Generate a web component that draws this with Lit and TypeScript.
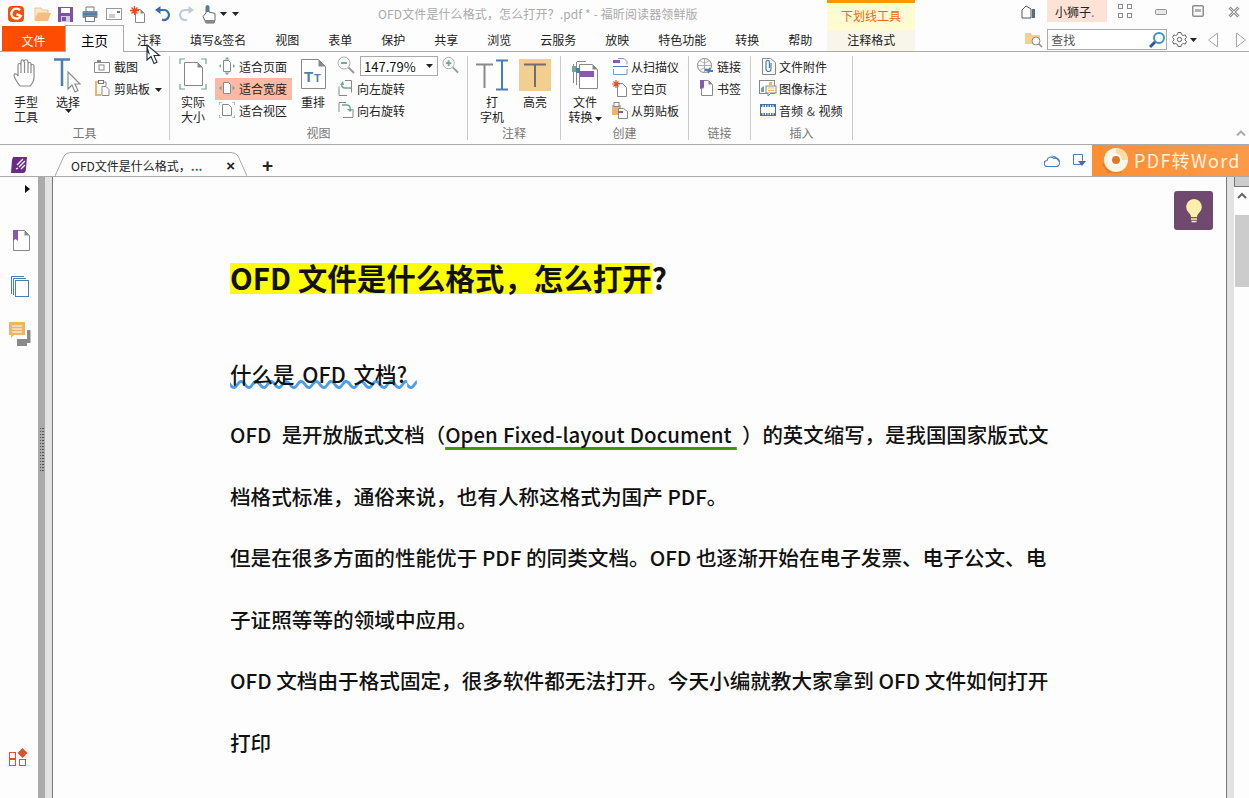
import { LitElement, html, css } from 'lit'
import { customElement } from 'lit/decorators.js'

const GR = '#8a8a8a'
const TEAL = '#6fa893'
const BL = '#4a7eb5'
const PU = '#8a5aa8'
const OR = '#f0b464'

const ic = {
  logo: html`<svg width="16" height="16" viewBox="0 0 16 16"><rect width="16" height="16" rx="4" fill="#f1520f"/><path d="M12 4.200A5 5 0 1 0 12.800 10L8.500 8.200" fill="none" stroke="#fff" stroke-width="2.400"/></svg>`,
  folder: html`<svg width="17" height="16" viewBox="0 0 17 16"><path d="M1 2h6l1 2h6v3H4L1 14z" fill="#fbe6c6" stroke="#f0c48c"/><path d="M4 7h13l-3 8H1z" fill="#f3bf80"/></svg>`,
  save: html`<svg width="15" height="15" viewBox="0 0 15 15"><rect width="15" height="15" fill="#7f51a5"/><rect x="3" y="1" width="9" height="5" fill="#fff"/><rect x="3" y="9" width="9" height="6" fill="#d9cbe6"/><rect x="4" y="10" width="4" height="4" fill="#7f51a5"/></svg>`,
  print: html`<svg width="16" height="16" viewBox="0 0 16 16"><path d="M4 5V1h8v4" fill="#fff" stroke="#7a7a7a"/><rect x="0.500" y="5" width="15" height="7" rx="1" fill="#7c8a96"/><rect x="1" y="7" width="14" height="2" fill="#4a7eb5"/><rect x="3.500" y="10.500" width="9" height="5" fill="#fff" stroke="#7a7a7a"/></svg>`,
  mail: html`<svg width="16" height="13" viewBox="0 0 16 13"><rect x="0.500" y="0.500" width="15" height="11" fill="#fff" stroke="#9a9a9a"/><path d="M3 7h6M3 9h6" stroke="#9a9a9a"/><rect x="11" y="3" width="3" height="2" fill="#4a7eb5"/></svg>`,
  fresh: html`<svg width="16" height="17" viewBox="0 0 16 17"><path d="M5.500 3.500h5l4 4v9h-9z" fill="#fff" stroke="#888"/><path d="M10.500 3.500l4 4h-4z" fill="#888"/><path d="M4.500 0v9M0 4.500h9M1.500 1.500l6 6M7.500 1.500l-6 6" stroke="#ea4b22" stroke-width="1.300"/></svg>`,
  undo: html`<svg width="17" height="16" viewBox="0 0 17 16"><path d="M5 4h5a5 5 0 1 1-2 9.600" fill="none" stroke="#3a6ca6" stroke-width="2.200"/><path d="M6.500 0v8L1 4z" fill="#3a6ca6"/></svg>`,
  redo: html`<svg width="17" height="16" viewBox="0 0 17 16"><path d="M12 4H7a5 5 0 1 0 2 9.600" fill="none" stroke="#bccde0" stroke-width="2.200"/><path d="M10.500 0v8L16 4z" fill="#bccde0"/></svg>`,
  pointer: html`<svg width="16" height="19" viewBox="0 0 16 19"><path d="M4 8V2a1.500 1.500 0 0 1 3 0v5l6 1.500V15l-1 3H4L1 11.500z" fill="#fff" stroke="#666"/><path d="M4 7V2a1.500 1.500 0 0 1 3 0v5z" fill="#4a7eb5"/><rect x="3" y="15" width="10" height="3" fill="#888"/></svg>`,
  tag: html`<svg width="15" height="14" viewBox="0 0 15 14"><path d="M1 5l4-4 5 3v9H1z" fill="#fff" stroke="#555"/><rect x="11" y="4" width="3" height="9" fill="#5a6a80"/></svg>`,
  full: html`<svg width="14" height="14" viewBox="0 0 14 14" fill="none" stroke="#8a8a8a"><rect x="0.500" y="0.500" width="4" height="4"/><rect x="9.500" y="0.500" width="4" height="4"/><rect x="0.500" y="9.500" width="4" height="4"/><rect x="9.500" y="9.500" width="4" height="4"/></svg>`,
  min: html`<svg width="12" height="6" viewBox="0 0 12 6"><rect x="0.500" y="0.500" width="11" height="5" rx="1" fill="#e8e8e8" stroke="#8f8f8f"/></svg>`,
  max: html`<svg width="12" height="12" viewBox="0 0 12 12"><rect x="0.750" y="0.750" width="10.500" height="10.500" rx="1" fill="none" stroke="#8f8f8f" stroke-width="1.500"/><rect x="3" y="4" width="6" height="3" fill="#b5b5b5"/></svg>`,
  close: html`<svg width="12" height="12" viewBox="0 0 12 12"><path d="M1.500 1.500l9 9M10.500 1.500l-9 9" stroke="#8f8f8f" stroke-width="3"/><path d="M1.500 1.500l9 9M10.500 1.500l-9 9" stroke="#e6e6e6" stroke-width="1"/></svg>`,
  fsearch: html`<svg width="18" height="16" viewBox="0 0 18 16"><path d="M0 1h6l1 2h8v9H0z" fill="#f3cf96"/><circle cx="11" cy="9" r="4" fill="#fff" stroke="#888"/><path d="M14 12l3 3" stroke="#888" stroke-width="1.500"/></svg>`,
  mag: html`<svg width="18" height="18" viewBox="0 0 18 18"><circle cx="11" cy="7" r="5" fill="#fff" stroke="#3f8fd0" stroke-width="2"/><path d="M7 11l-5 5" stroke="#2c5f99" stroke-width="3"/></svg>`,
  gear: html`<svg width="15" height="15" viewBox="0 0 15 15" fill="none" stroke="#666"><path d="M6 .5h3l.5 2 1.700 1 2-.6 1.300 2.600-1.500 1.500v1l1.500 1.500-1.300 2.600-2-.6-1.700 1-.5 2H6l-.5-2-1.700-1-2 .6L.5 9.500 2 8V7L.5 5.500l1.300-2.600 2 .6 1.700-1z"/><circle cx="7.500" cy="7.500" r="2.200"/></svg>`,
  prev: html`<svg width="12" height="16" viewBox="0 0 12 16"><path d="M10.500 1v14L1.500 8z" fill="#fff" stroke="#a8a8a8"/></svg>`,
  next: html`<svg width="12" height="16" viewBox="0 0 12 16"><path d="M1.500 1v14l9-7z" fill="#fff" stroke="#a8a8a8"/></svg>`,
  hand: html`<svg width="26" height="29" viewBox="0 0 26 29" fill="#fff" stroke="#8c8c8c" stroke-width="1.200"><path d="M7 27c-3-4-6-8-6-11 1-2 3-1 4 1V6c0-2 3-2 3 0V3c0-3 3-3 3 0v0c0-3 4-3 4 0v2c0-2 3-2 3 0v2c0-2 3-2 3 0v11c0 4-2 7-4 9z"/><path d="M8 6v8M11.500 3v11M15 5v9M18 7v7"/></svg>`,
  select: html`<svg width="28" height="35" viewBox="0 0 28 35"><path d="M0 1.500h16M8 2v26" stroke="#4a7eb5" stroke-width="2.500"/><path d="M14 14v17l4-4 3 7 3-1.500-3-6.500h5z" fill="#fff" stroke="#8c8c8c" stroke-width="1.200"/></svg>`,
  camera: html`<svg width="16" height="13" viewBox="0 0 16 13"><path d="M.5 2.500h15v10H.5z" fill="#fff" stroke="#888"/><rect x="3" y="0" width="4" height="2" fill="#888"/><rect x="5" y="5" width="5" height="5" fill="#fff" stroke="#888"/></svg>`,
  clip: html`<svg width="15" height="16" viewBox="0 0 15 16"><path d="M4 2H1v13h5" fill="none" stroke="#eeb468" stroke-width="2"/><path d="M8 2h3v4" fill="none" stroke="#888"/><rect x="3.500" y="0.500" width="5" height="3" fill="#fff" stroke="#777"/><path d="M7 6.500h4l3 3v6H7z" fill="#fff" stroke="#888"/></svg>`,
  actual: html`<svg width="28" height="32" viewBox="0 0 28 32"><path d="M1 6V1h5M22 1h5v5M1 26v5h5M27 26v5h-5" fill="none" stroke=${TEAL} stroke-width="1.200"/><path d="M5.500 4.500h13l5 5v18h-18z" fill="#fff" stroke="#888"/><path d="M18.500 4.500l5 5h-5z" fill="#888"/></svg>`,
  fitPage: html`<svg width="16" height="18" viewBox="0 0 16 18"><path d="M8 0l2.500 2.500h-5zM8 18l-2.500-2.500h5z" fill=${TEAL}/><path d="M0 9l2-2v4zM16 9l-2-2v4z" fill=${TEAL}/><path d="M4.500 3.500h5l2 2v9h-7z" fill="#fff" stroke="#888"/></svg>`,
  fitWidth: html`<svg width="16" height="14" viewBox="0 0 16 14"><path d="M0 7l2.500-2.500v5zM16 7l-2.500-2.500v5z" fill=${TEAL}/><path d="M4.500 1.500h5l2 2v9h-7z" fill="#fff" stroke="#888"/></svg>`,
  fitView: html`<svg width="16" height="16" viewBox="0 0 16 16"><path d="M0 3V0h3M13 0h3v3M0 13v3h3M16 13v3h-3" fill="none" stroke=${TEAL} stroke-width="1.200"/><path d="M3.500 2.500h6l3 3v8h-9z" fill="#fff" stroke="#888"/></svg>`,
  reflow: html`<svg width="25" height="30" viewBox="0 0 25 30"><path d="M.5.500h17l7 7v22H.5z" fill="#fff" stroke="#888"/><path d="M17.500.500l7 7h-7z" fill="#888"/><text x="3" y="23" font-family="Liberation Sans" font-weight="700" font-size="15" fill="#4a7eb5">T</text><text x="13" y="23" font-family="Liberation Sans" font-weight="700" font-size="11" fill="#4a7eb5">T</text></svg>`,
  zoomOut: html`<svg width="18" height="18" viewBox="0 0 18 18"><circle cx="7" cy="7" r="6" fill="#fff" stroke="#aaa"/><path d="M4 7h6" stroke=${TEAL} stroke-width="2"/><path d="M11.500 11.500l5.500 5.500" stroke="#999" stroke-width="2"/></svg>`,
  zoomIn: html`<svg width="17" height="18" viewBox="0 0 18 18"><circle cx="7" cy="7" r="6" fill="#fff" stroke="#aaa"/><path d="M4 7h6M7 4v6" stroke=${TEAL} stroke-width="2"/><path d="M11.500 11.500l5.500 5.500" stroke="#999" stroke-width="2"/></svg>`,
  rotL: html`<svg width="16" height="18" viewBox="0 0 16 18" fill="none"><path d="M7 1.500h6.500v12M1 7.500v9h8" stroke="#888"/><path d="M13 9H6.500a3 3 0 0 1-2-5" stroke=${TEAL} stroke-width="1.500"/><path d="M2 6l3-4 1 4z" fill=${TEAL}/></svg>`,
  rotR: html`<svg width="16" height="18" viewBox="0 0 16 18" fill="none"><path d="M1 1.500h7M1 2v9M15 8v8.500H5" stroke="#888"/><path d="M4 4h5a3 3 0 0 1 3 4" stroke=${TEAL} stroke-width="1.500"/><path d="M9 8h6l-3 3z" fill=${TEAL}/></svg>`,
  typew: html`<svg width="33" height="32" viewBox="0 0 33 32"><path d="M0 5.500h17M8.500 5v24" stroke=${GR} stroke-width="2"/><path d="M20 1.500h12M20 30.500h12M26 2v28" stroke=${BL} stroke-width="2"/></svg>`,
  high: html`<svg width="32" height="32" viewBox="0 0 32 32"><rect width="32" height="32" fill="#f2cf90"/><path d="M5 5.500h22M16 5v23" stroke="#6f6f6f" stroke-width="2"/></svg>`,
  conv: html`<svg width="27" height="32" viewBox="0 0 27 32"><path d="M1.500 5v19M5 2.500h9M4.500 3v23" fill="none" stroke=${GR}/><rect x="0" y="7" width="4" height="6" fill=${TEAL}/><path d="M7.500 5.500h13l5 5v19h-18z" fill="#fff" stroke="#888"/><path d="M20.500 5.500l5 5h-5z" fill="#888"/><rect x="8" y="12" width="14" height="6" fill=${PU}/><rect x="4" y="9" width="4" height="5" fill=${BL}/></svg>`,
  scan: html`<svg width="15" height="17" viewBox="0 0 15 17"><path d="M5 .5h6l3 3v3M.5 11v5.500h13.500V11" fill="none" stroke="#7a9cc0"/><rect y="2" width="7" height="3" fill=${PU}/><path d="M0 8.500h15" stroke=${BL}/></svg>`,
  blank: html`<svg width="16" height="17" viewBox="0 0 16 17"><path d="M5.500 3.500h5l4 4v9h-9z" fill="#fff" stroke="#888"/><path d="M4 0v8M0 4h8M1.500 1.500l5 5M6.500 1.500l-5 5" stroke="#ea4b22" stroke-width="1.200"/></svg>`,
  clip2: html`<svg width="16" height="17" viewBox="0 0 16 17"><path d="M0 3h9v10H0z" fill=${OR}/><rect x="2" y="0.500" width="5" height="4" fill="#fff" stroke="#888"/><path d="M6.500 6.500h5l4 3v7h-9z" fill="#fff" stroke="#888"/><rect x="6" y="9" width="5" height="2" fill=${PU}/></svg>`,
  link: html`<svg width="17" height="17" viewBox="0 0 17 17" fill="none"><circle cx="7.500" cy="7.500" r="7" stroke="#888"/><path d="M.5 7.500h14M7.500.5v14M3 2.500c3 3 6 3 9 0M3 12.500c3-3 6-3 9 0" stroke="#aaa"/><path d="M8 12h4l1-2M16 13h-4l-1 2" stroke=${BL} stroke-width="2"/></svg>`,
  mark: html`<svg width="14" height="16" viewBox="0 0 14 16"><path d="M2.500.5h7l4 4v11h-11z" fill="#fff" stroke="#888"/><path d="M9.500.5l4 4h-4z" fill="#888"/><path d="M1 0h4v7l-1 2-1-1-2 1z" fill=${PU}/></svg>`,
  attach: html`<svg width="15" height="17" viewBox="0 0 15 17" fill="none"><path d="M1.500.5h8l5 4v12h-13z" stroke="#888"/><path d="M10 5v6a2.500 2.500 0 0 1-5 0V4a1.700 1.700 0 0 1 3.400 0v6" stroke=${BL} stroke-width="1.200"/></svg>`,
  imgnote: html`<svg width="18" height="17" viewBox="0 0 18 17"><rect x="0.500" y="0.500" width="15" height="13" fill="#fff" stroke="#888"/><path d="M2 12V8l3-2v6z" fill=${TEAL}/><rect x="7" y="6" width="10" height="7" fill="#fff" stroke="#888"/><path d="M9 13v3l3-3" fill="#fff" stroke="#888"/><rect x="10" y="2" width="3" height="3" fill=${OR}/><path d="M9 8h6M9 10.500h6" stroke=${OR}/></svg>`,
  video: html`<svg width="16" height="12" viewBox="0 0 16 12"><rect x="0.500" y="0.500" width="15" height="11" fill="#fff" stroke="#3f74ad"/><path d="M1 2h14M1 10h14" stroke="#3f74ad" stroke-width="2" stroke-dasharray="1.500 1"/></svg>`,
  docs: html`<svg width="16" height="16" viewBox="0 0 16 16"><path d="M2 0h14l-1 12c0 2-1 4-3 4H0l1-13z" fill="#6c2a86"/><path d="M6 8l6-6M8 10l6-6M10 12l4-4M5 12l2-1" stroke="#fff" stroke-width="1.300"/></svg>`,
  cloud: html`<svg width="16" height="12" viewBox="0 0 16 12"><path d="M3.500 11.500a3 3 0 0 1-.5-6 4 4 0 0 1 7-2 3.500 3.500 0 0 1 3 8z" fill="#fff" stroke=${BL} stroke-width="1.200"/><path d="M7 1c4-1 8 2 8 7-1-3-4-6-8-7z" fill=${BL}/></svg>`,
  dl: html`<svg width="13" height="13" viewBox="0 0 13 13"><path d="M8 10.500H.5V.5h9v6" fill="none" stroke=${BL}/><path d="M5 7h8l-4 5z" fill="#3e6fa5"/></svg>`,
  wheel: html`<svg width="30" height="28" viewBox="0 0 30 28"><path d="M2 18L10 6l12 20H8z" fill="#e97f25"/><circle cx="16" cy="13" r="12" fill="#fdf5e6"/><path d="M16 1a12 12 0 0 1 12 12h-6A6 6 0 0 0 16 7z" fill="#fbdca8"/><circle cx="16" cy="13" r="6" fill="#fff"/><circle cx="16" cy="13" r="4" fill="#e4762a"/></svg>`,
  navMark: html`<svg width="18" height="21" viewBox="0 0 18 21"><path d="M1.500.5h11l5 5v15h-16z" fill="#fff" stroke=${GR}/><path d="M12.500.5l5 5h-5z" fill=${GR}/><path d="M1 0h5v11l-2.500-2L1 11z" fill=${PU}/></svg>`,
  navPages: html`<svg width="18" height="21" viewBox="0 0 18 21" fill="none" stroke=${BL}><path d="M.5 18V.5H13M2.500 19V2.500H15"/><rect x="4.500" y="4.500" width="13" height="16" fill="#fff"/></svg>`,
  navNote: html`<svg width="22" height="25" viewBox="0 0 22 25"><path d="M8 17h10V8h3.500v13H18v3H8z" fill=${GR}/><path d="M0 0h16v13H5l-3 3v-3H0z" fill=${OR}/><path d="M3 4h10M3 7h10M3 10h10" stroke="#fff"/></svg>`,
  navApps: html`<svg width="19" height="18" viewBox="0 0 19 18"><rect x="0.500" y="4.500" width="6" height="6" fill="#fff" stroke="#d8532f"/><rect x="0.500" y="11.500" width="6" height="6" fill="#fff" stroke="#d8532f"/><rect x="10.500" y="11.500" width="6" height="6" fill="#fff" stroke="#d8532f"/><path d="M13.500 0l5 5-5 5-5-5z" fill="#d8532f"/></svg>`,
  bulb: html`<svg width="18" height="26" viewBox="0 0 18 26"><path d="M9 1a8 8 0 0 0-5 14c1 1 2 2 2 4h6c0-2 1-3 2-4A8 8 0 0 0 9 1z" fill="#fbeeaa"/><path d="M6 21h6M6.500 23.500h5" stroke="#fbeeaa" stroke-width="1.400"/></svg>`,
  cursor: html`<svg width="16" height="21" viewBox="0 0 16 21"><path d="M1 1v15l4-3.500 3 7 3-1.300-3-6.700h5.500z" fill="#fff" stroke="#25303c" stroke-width="1.100"/><path d="M1 1v7l3 3z" fill="#25303c"/></svg>`
}

const arrow = html`<svg class="arw" width="7" height="4" viewBox="0 0 7 4"><path d="M0 0h7L3.500 4z" fill="#222"/></svg>`
const inlineArrow = html`<svg class="inline-arw" width="7" height="4" viewBox="0 0 7 4"><path d="M0 0h7L3.500 4z" fill="#222"/></svg>`

const bodyLines = [
  '档格式标准，通俗来说，也有人称这格式为国产 PDF。',
  '但是在很多方面的性能优于 PDF 的同类文档。OFD 也逐渐开始在电子发票、电子公文、电',
  '子证照等等的领域中应用。',
  'OFD 文档由于格式固定，很多软件都无法打开。今天小编就教大家拿到 OFD 文件如何打开',
  '打印'
]

const tabs = ['注释', '填写&签名', '视图', '表单', '保护', '共享', '浏览', '云服务', '放映', '特色功能', '转换', '帮助']

@customElement('app-root')
export class AppRoot extends LitElement {
  static styles = css`
    :host {
      display: block;
      position: relative;
      height: 798px;
      overflow: hidden;
      background: #fdfdfd;
      color: #222;
      font: 12px/15px "Noto Sans CJK SC", "Liberation Sans", sans-serif;
    }
    svg { display: block; flex: none; }

    /* title row */
    .title-row { display: flex; height: 26px; }
    .qa { display: flex; align-items: center; width: 370px; padding: 2px 0 0 8px; height: 24px; flex: none; }
    .qa-i { width: 24px; flex: none; display: flex; }
    .qa-i:first-child { width: 26px; }
    .qa-more { display: flex; gap: 5px; margin-left: -6px; }
    .title { width: 449px; flex: none; color: #aaa; line-height: 28px; white-space: pre; letter-spacing: .12px; }
    .ctx-top {
      width: 88px; height: 27px; flex: none; position: relative; z-index: 1;
      border-top: 3px solid #ff9500; background: #fffcd2; color: #f2670f; text-align: center; line-height: 25px;
    }
    .win { display: flex; align-items: flex-start; margin-left: 106px; }
    .win-tag { margin-top: 5px; }
    .user { width: 60px; height: 22px; margin-left: 11px; background: #fde3d6; line-height: 24px; padding-left: 8px; box-sizing: border-box; }
    .user b { color: #4a7eb5; font-weight: 400; }
    .win-full { margin: 4px 0 0 11px; }
    .win-min { margin: 9px 0 0 23px; }
    .win-max { margin: 5px 0 0 25px; }
    .win-close { margin: 6px 0 0 24px; }

    /* tab row */
    .tab-row { display: flex; height: 25px; border-bottom: 1px solid #aaa; padding-left: 2px; }
    .file { width: 63px; height: 25px; background: #ff4c00; color: #fff; text-align: center; line-height: 29px; flex: none; }
    .home {
      width: 57px; height: 25px; margin: -1px 0 -1px 1px; padding-bottom: 1px; flex: none;
      border: 1px solid #aaa; border-bottom: 0; background: #fdfdfd; color: #000;
      font-size: 13.500px; text-align: center; line-height: 28px; position: relative; left: -1px;
    }
    .tabs { display: flex; gap: 29px; padding-left: 12px; line-height: 28px; white-space: nowrap; }
    .ctx-bot { width: 88px; height: 25px; margin-left: 15px; flex: none; background: #f8f6ea; text-align: center; line-height: 28px; }
    .tools { display: flex; align-items: center; margin-left: 110px; height: 25px; padding-top: 1px; }
    .search {
      width: 120px; height: 21px; margin-left: 4px; box-sizing: border-box; border: 1px solid #aaa; background: #fff;
      display: flex; align-items: center; justify-content: space-between; padding: 0 0 0 3px; color: #555;
    }
    .gear { margin-left: 5px; }
    .gear-arw { margin-left: 3px; }
    .prev { margin-left: 10px; }
    .next { margin-left: 16px; }

    /* ribbon */
    .ribbon { display: flex; height: 92px; border-bottom: 1px solid #aaa; }
    .grp { display: flex; flex-direction: column; height: 84px; margin-top: 4px; border-right: 1px solid #ccc; box-sizing: border-box; flex: none; }
    .g1 { width: 170px; } .g2 { width: 298px; } .g3 { width: 93px; }
    .g4 { width: 128px; } .g5 { width: 62px; } .g6 { width: 102px; }
    .grp-body { display: flex; height: 71px; }
    .grp-label { height: 13px; line-height: 11px; text-align: center; color: #777; }
    .lg { display: flex; flex-direction: column; align-items: center; flex: none; text-align: center; }
    .lg-ic { height: 38px; display: flex; align-items: flex-start; justify-content: center; }
    .w40 { width: 40px; } .w44 { width: 44px; margin-left: 1px; } .w48 { width: 48px; } .w32 { width: 32px; margin-left: 3px; }
    .ml1 { margin-left: 1px; }
    .ml2 { margin-left: 2px; }
    .ml6 { margin-left: 6px; }
    .p2 { padding-top: 2px; } .p3 { padding-top: 3px; }
    .col { display: flex; flex-direction: column; flex: none; }
    .item { display: flex; align-items: center; gap: 3px; height: 22px; padding-bottom: 2px; box-sizing: border-box; white-space: nowrap; }
    .ic16 { width: 16px; display: flex; justify-content: center; flex: none; }
    .arw { flex: none; }
    .col-tools { margin-left: 6px; }
    .col-tools .item { gap: 4px; }
    .col-tools .inline-arw { margin-left: 5px; }
    .col-fit { width: 77px; }
    .col-fit .item { padding-left: 4px; gap: 4px; }
    .item.on { background: #fdb9a3; }
    .col-zoom { margin-left: 4px; }
    .col-zoom .item { padding-left: 1px; }
    .zoom-row { display: flex; align-items: flex-start; height: 22px; }
    .zoom-box {
      width: 78px; height: 20px; margin: 0 4px 0 5px; box-sizing: border-box; border: 1px solid #aaa; background: #fff;
      display: flex; align-items: center; justify-content: space-between; padding: 0 4px 0 3px; color: #111; font-size: 13px;
    }
    .col-make .item { padding-left: 3px; }
    .col-link { margin-left: 8px; }
    .col-link .ic16 { width: 17px; }
    .col-ins { margin-left: 9px; }
    .inline-arw { display: inline-block; vertical-align: middle; margin-left: 2px; }
    .amp { color: #444; padding: 0 1px; }
    .collapse { margin: 78px 0 0 383px; }

    /* document tabs */
    .doc-bar { display: flex; height: 31px; border-bottom: 1px solid #aaa; }
    .doc-mark { margin: 12px 0 0 11px; }
    .doc-tab { display: grid; width: 192px; height: 24px; margin: 7px 0 0 28px; flex: none; }
    .doc-tab > * { grid-area: 1 / 1; }
    .doc-tab-in { display: flex; align-items: center; justify-content: space-between; padding: 2px 12px 0 16px; }
    .doc-tab-name b { color: #2f5f9a; font-weight: 700; }
    .doc-x { font: 700 15px/15px "Liberation Sans", sans-serif; color: #222; }
    .doc-plus { margin: 11px 0 0 15px; font: 700 19px/19px "Liberation Sans", sans-serif; color: #222; width: 12px; }
    .doc-right { display: flex; margin-left: auto; align-items: center; }
    .doc-dl { margin: 0 6px 0 13px; }
    .convert {
      width: 157px; height: 31px; display: flex; align-items: center; background: linear-gradient(to right, #fd8f32, #fd9a48); color: #fff3e2;
      font-size: 18px; letter-spacing: 1.300px; white-space: nowrap; padding-left: 8px; box-sizing: border-box; gap: 4px;
    }

    /* document area */
    .body { display: flex; height: 621px; }
    .nav { width: 38px; flex: none; display: flex; flex-direction: column; align-items: flex-start; }
    .nav-arrow { margin: 8px 0 0 25px; width: 0; height: 0; border-left: 5px solid #111; border-top: 4px solid transparent; border-bottom: 4px solid transparent; }
    .nav-mark { margin: 37px 0 0 12px; }
    .nav-pages { margin: 25px 0 0 11px; }
    .nav-note { margin: 25px 0 0 9px; }
    .nav-apps { margin: auto 0 32px 9px; }
    .split-a { width: 7px; flex: none; background: #aaa; display: flex; align-items: center; justify-content: center; }
    .grip {
      width: 4px; height: 44px; margin-top: -76px;
      background:
        linear-gradient(to right, transparent 1px, #aaa 1px 2px, transparent 2px),
        repeating-linear-gradient(to bottom, #555 0 1px, transparent 1px 3px);
    }
    .split-b { width: 7px; flex: none; background: #e2e2e2; border-right: 1px solid #777; }
    .page { flex: 1; padding: 86px 0 0 177px; min-width: 0; overflow: hidden; background: #fdfdfd; font-weight: 500; font-size: 20.620px; color: #111; }
    .h1 { font-size: 29.500px; font-weight: 700; line-height: 29px; height: 31px; white-space: nowrap; color: #111; margin-bottom: 48.500px; }
    .hl { display: inline-block; background: #ffff00; height: 31px; line-height: 29px; }
    .ln { height: 61.500px; line-height: 61.500px; white-space: pre; }
    .sub { font-size: 21.500px; word-spacing: 3px; }
    .tail { word-spacing: 0; }
    .first { font-size: 20.450px; word-spacing: .6px; }
    .wavy { text-decoration: underline wavy #4b9fe8 2.500px; text-underline-offset: -3px; text-decoration-skip-ink: none; }
    .green { text-decoration: underline solid #3a9d00 3px; text-underline-offset: 4px; text-decoration-skip-ink: none; }
    .sb { width: 23px; flex: none; display: flex; border-left: 1px solid #777; box-sizing: border-box; }
    .sb-a { width: 7px; background: #e2e2e2; }
    .sb-b { flex: 1; display: flex; flex-direction: column; background: #fdfdfd; }
    .sb-top { height: 9px; background: #ccc; border: 1px solid #777; border-top: 0; border-right: 0; }
    .sb-up { margin: 5px 0 0 3px; }
    .sb-thumb { height: 72px; margin: 16px 0 0 1px; background: #ccc; }
    .bulb-btn {
      position: absolute; left: 1174px; top: 191px; width: 39px; height: 39px; border-radius: 3px;
      background: #6f4a6e; display: flex; align-items: center; justify-content: center;
    }
    .cursor { position: absolute; left: 146px; top: 44px; }
  `

  qa () {
    return html`
      <div class="qa">
        ${[ic.logo, ic.folder, ic.save, ic.print, ic.mail, ic.fresh, ic.undo, ic.redo, ic.pointer].map(i => html`<span class="qa-i">${i}</span>`)}
        <span class="qa-more">${arrow}${arrow}</span>
      </div>`
  }

  item (icon: unknown, label: unknown, on = false) {
    return html`<div class="item ${on ? 'on' : ''}"><span class="ic16">${icon}</span><span>${label}</span></div>`
  }

  ribbon () {
    return html`
      <div class="ribbon">
        <section class="grp g1">
          <div class="grp-body">
            <div class="lg w40 ml6"><div class="lg-ic"><span class="p3">${ic.hand}</span></div>手型<br>工具</div>
            <div class="lg w40 ml2"><div class="lg-ic"><span class="p2">${ic.select}</span></div><div>选择</div>${arrow}</div>
            <div class="col col-tools">
              ${this.item(ic.camera, '截图')}
              ${this.item(ic.clip, html`剪贴板${inlineArrow}`)}
            </div>
          </div>
          <div class="grp-label">工具</div>
        </section>
        <section class="grp g2">
          <div class="grp-body">
            <div class="lg w44"><div class="lg-ic"><span class="p2">${ic.actual}</span></div>实际<br>大小</div>
            <div class="col col-fit">
              ${this.item(ic.fitPage, '适合页面')}
              ${this.item(ic.fitWidth, '适合宽度', true)}
              ${this.item(ic.fitView, '适合视区')}
            </div>
            <div class="lg w40 ml1"><div class="lg-ic"><span class="p3">${ic.reflow}</span></div>重排</div>
            <div class="col col-zoom">
              <div class="zoom-row">${ic.zoomOut}<div class="zoom-box">147.79%${arrow}</div>${ic.zoomIn}</div>
              ${this.item(ic.rotL, '向左旋转')}
              ${this.item(ic.rotR, '向右旋转')}
            </div>
          </div>
          <div class="grp-label">视图</div>
        </section>
        <section class="grp g3">
          <div class="grp-body">
            <div class="lg w48"><div class="lg-ic"><span class="p3">${ic.typew}</span></div>打<br>字机</div>
            <div class="lg w32"><div class="lg-ic"><span class="p3">${ic.high}</span></div>高亮</div>
          </div>
          <div class="grp-label">注释</div>
        </section>
        <section class="grp g4">
          <div class="grp-body">
            <div class="lg w48"><div class="lg-ic"><span class="p3">${ic.conv}</span></div><div>文件<br>转换${inlineArrow}</div></div>
            <div class="col col-make">
              ${this.item(ic.scan, '从扫描仪')}
              ${this.item(ic.blank, '空白页')}
              ${this.item(ic.clip2, '从剪贴板')}
            </div>
          </div>
          <div class="grp-label">创建</div>
        </section>
        <section class="grp g5">
          <div class="grp-body">
            <div class="col col-link">
              ${this.item(ic.link, '链接')}
              ${this.item(ic.mark, '书签')}
            </div>
          </div>
          <div class="grp-label">链接</div>
        </section>
        <section class="grp g6">
          <div class="grp-body">
            <div class="col col-ins">
              ${this.item(ic.attach, '文件附件')}
              ${this.item(ic.imgnote, '图像标注')}
              ${this.item(ic.video, html`音频 <span class="amp">&amp;</span> 视频`)}
            </div>
          </div>
          <div class="grp-label">插入</div>
        </section>
        <svg class="collapse" width="10" height="6" viewBox="0 0 10 6"><path d="M1 5.500l4-4 4 4" fill="none" stroke="#aaa" stroke-width="2"/></svg>
      </div>`
  }

  render () {
    return html`
      <div class="title-row">
        ${this.qa()}
        <div class="title">OFD文件是什么格式，怎么打开？.pdf * - 福昕阅读器领鲜版</div>
        <div class="ctx-top">下划线工具</div>
        <div class="win">
          <span class="win-tag">${ic.tag}</span>
          <div class="user">小狮子<b>.</b></div>
          <span class="win-full">${ic.full}</span>
          <span class="win-min">${ic.min}</span>
          <span class="win-max">${ic.max}</span>
          <span class="win-close">${ic.close}</span>
        </div>
      </div>
      <div class="tab-row">
        <div class="file">文件</div>
        <div class="home">主页</div>
        <div class="tabs">${tabs.map(t => html`<span>${t}</span>`)}</div>
        <div class="ctx-bot">注释格式</div>
        <div class="tools">
          ${ic.fsearch}
          <div class="search">查找${ic.mag}</div>
          <span class="gear">${ic.gear}</span>
          <span class="gear-arw">${arrow}</span>
          <span class="prev">${ic.prev}</span>
          <span class="next">${ic.next}</span>
        </div>
      </div>
      ${this.ribbon()}
      <div class="doc-bar">
        <span class="doc-mark">${ic.docs}</span>
        <div class="doc-tab">
          <svg width="192" height="24" viewBox="0 0 192 24"><path d="M0 24L9 4Q11 .5 16 .5H176Q181 .5 183 4L192 24" fill="#fdfdfd" stroke="#aaa"/></svg>
          <div class="doc-tab-in"><span class="doc-tab-name">OFD文件是什么格式，<b>...</b></span><span class="doc-x">×</span></div>
        </div>
        <span class="doc-plus">+</span>
        <div class="doc-right">
          ${ic.cloud}
          <span class="doc-dl">${ic.dl}</span>
          <div class="convert">${ic.wheel}<span>PDF转Word</span></div>
        </div>
      </div>
      <div class="body">
        <div class="nav">
          <div class="nav-arrow"></div>
          <span class="nav-mark">${ic.navMark}</span>
          <span class="nav-pages">${ic.navPages}</span>
          <span class="nav-note">${ic.navNote}</span>
          <span class="nav-apps">${ic.navApps}</span>
        </div>
        <div class="split-a"><div class="grip"></div></div>
        <div class="split-b"></div>
        <div class="page">
          <div class="h1"><span class="hl">OFD 文件是什么格式，怎么打开</span>?</div>
          <div class="ln sub"><span class="wavy">什么是 OFD 文档?<span class="tail">  </span></span></div>
          <div class="ln first">OFD  是开放版式文档（<span class="green">Open Fixed-layout Document </span> ）的英文缩写，是我国国家版式文</div>
          ${bodyLines.map(l => html`<div class="ln">${l}</div>`)}
        </div>
        <div class="sb">
          <div class="sb-a"></div>
          <div class="sb-b">
            <div class="sb-top"></div>
            <svg class="sb-up" width="10" height="7" viewBox="0 0 10 7"><path d="M1 6l4-4 4 4" fill="none" stroke="#666" stroke-width="2"/></svg>
            <div class="sb-thumb"></div>
          </div>
        </div>
      </div>
      <div class="bulb-btn">${ic.bulb}</div>
      <div class="cursor">${ic.cursor}</div>
    `
  }
}
